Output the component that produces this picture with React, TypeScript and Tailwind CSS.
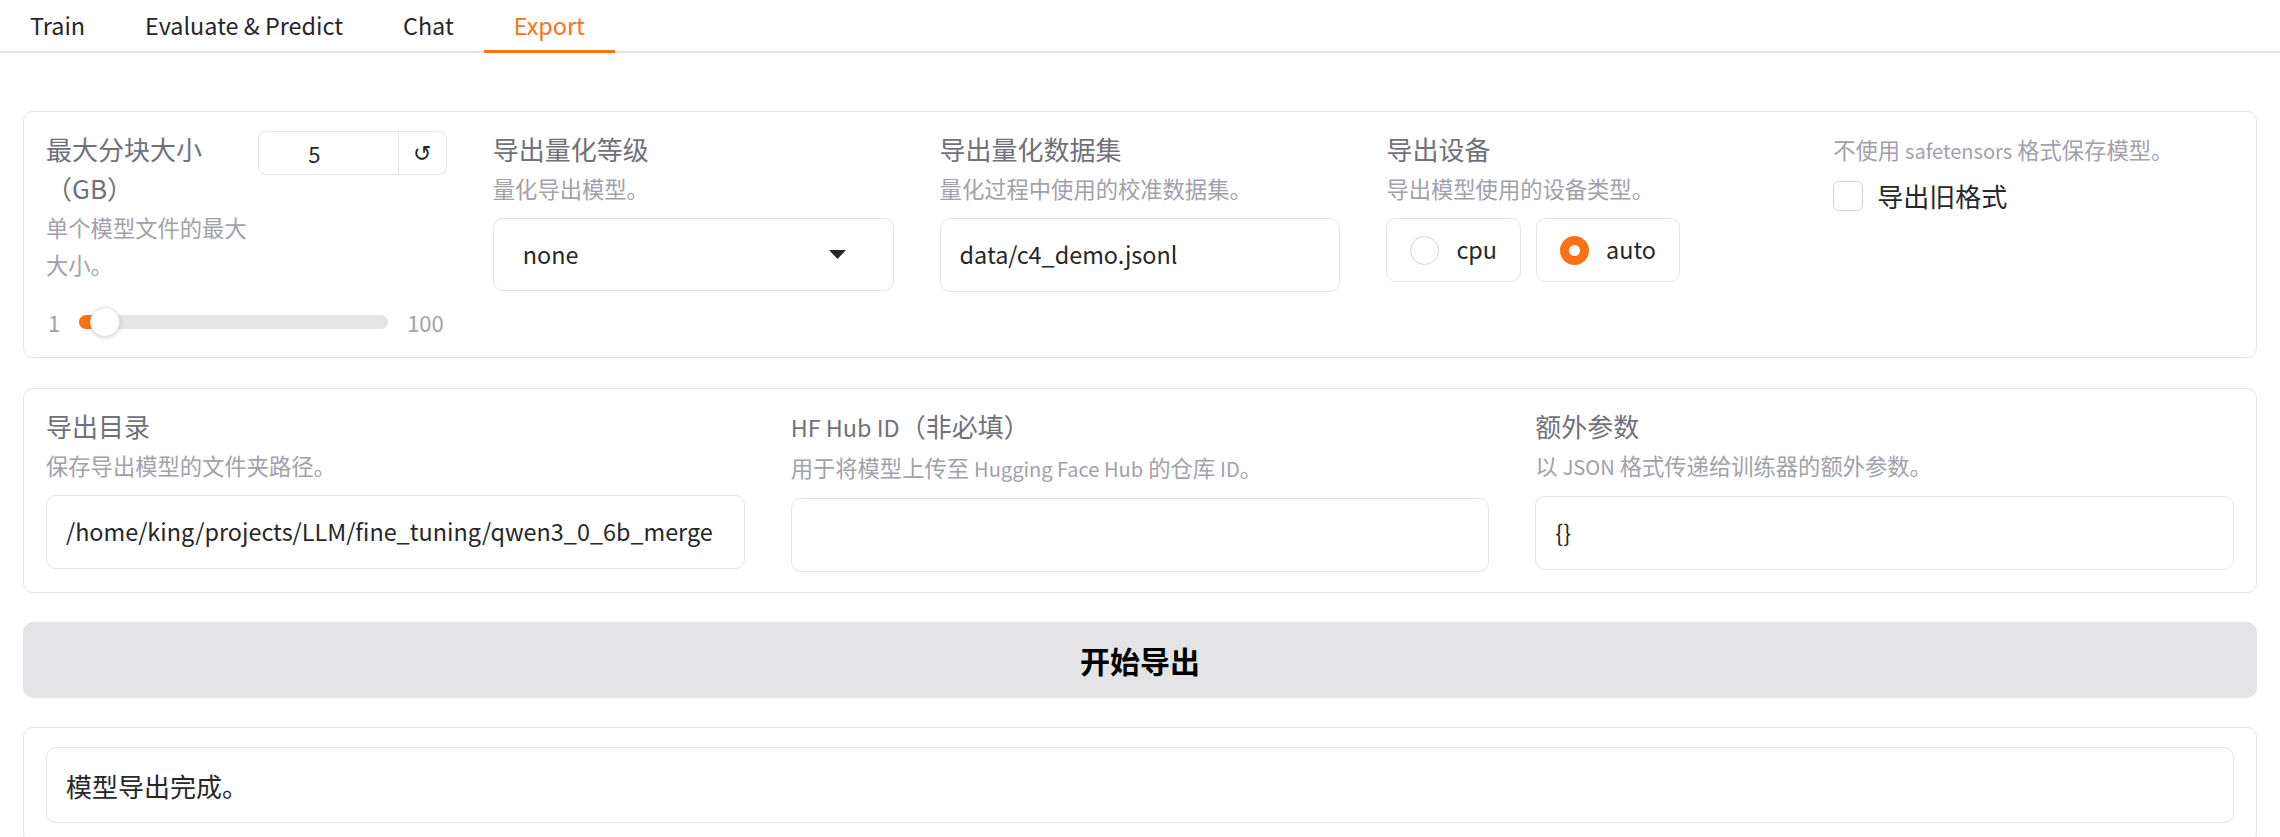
import React from "react";

const tabs = ["Train", "Evaluate & Predict", "Chat", "Export"];

// latin runs inside CJK text render a bit narrower in the original
function L({ children }: { children: React.ReactNode }) {
  return <span className="text-[0.9em]">{children}</span>;
}

function Label({ children }: { children: React.ReactNode }) {
  return <div className="text-[26px] leading-[39px] text-[#71717a]">{children}</div>;
}

function Info({ children }: { children: React.ReactNode }) {
  return <div className="mt-[2px] text-[22.3px] leading-[37px] text-[#a1a1aa]">{children}</div>;
}

function TextBox({ value }: { value: string }) {
  return (
    <div className="mt-[11px] h-[74px] flex items-center px-[19px] border border-[#e4e4e7] rounded-[10px] text-[23.4px] text-[#27272a] whitespace-nowrap overflow-hidden">
      {value}
    </div>
  );
}

function Radio({ label, checked }: { label: string; checked?: boolean }) {
  return (
    <div className="h-[64px] flex items-center gap-[17px] px-[23px] border border-[#e4e4e7] rounded-[10px]">
      {checked ? (
        <span className="w-[29px] h-[29px] rounded-full bg-[#f97316] flex items-center justify-center">
          <span className="w-[11px] h-[11px] rounded-full bg-white" />
        </span>
      ) : (
        <span className="w-[29px] h-[29px] rounded-full border border-[#d4d4d8] bg-white" />
      )}
      <span className="text-[23.4px] text-[#27272a]">{label}</span>
    </div>
  );
}

export default function App() {
  return (
    <div className="min-h-screen bg-white font-['Noto_Sans_CJK_SC',sans-serif]">
      {/* tabs */}
      <div className="flex h-[53px] border-b-2 border-[#e4e4e7]">
        {tabs.map((t) => {
          const active = t === "Export";
          return (
            <div
              key={t}
              className={`relative flex items-center px-[30px] text-[23.4px] ${active ? "text-[#f97316]" : "text-[#27272a]"}`}
            >
              {t}
              {active && <span className="absolute left-0 right-0 bottom-[-2px] h-[3px] bg-[#f97316]" />}
            </div>
          );
        })}
      </div>

      <div className="px-[23px] pt-[58px]">
        {/* settings card */}
        <div className="border border-[#e4e4e7] rounded-[10px] px-[22px] pt-[17px] pb-[20px]">
          <div className="grid grid-cols-5 gap-x-[46px] items-start">
            {/* slider */}
            <div className="flex flex-col">
              <div className="flex justify-between items-start">
                <div className="w-[210px]">
                  <Label>最大分块大小（GB）</Label>
                  <Info>单个模型文件的最大大小。</Info>
                </div>
                <div className="mt-[2px] flex h-[44px] border border-[#e4e4e7] rounded-[8px]">
                  <div className="w-[139px] flex items-center justify-center pr-[28px] text-[22px] text-[#27272a]">5</div>
                  <div className="w-[48px] flex items-center justify-center border-l border-[#e4e4e7] text-[22px] text-[#27272a] font-['DejaVu_Sans',sans-serif]">
                    ↺
                  </div>
                </div>
              </div>
              <div className="mt-[24px] h-[30px] flex items-center gap-[19px] text-[22px] text-[#a1a1aa]">
                <span className="pl-[2px]">1</span>
                <div className="relative flex-1 h-[14px] rounded-full bg-[#e4e4e7]">
                  <div className="absolute left-0 top-0 h-[14px] w-[26px] rounded-full bg-[#f97316]" />
                  <div className="absolute left-[11px] top-[-8px] w-[30px] h-[30px] rounded-full bg-white border border-[#e4e4e7] shadow-[0_1px_4px_rgba(0,0,0,0.18)]" />
                </div>
                <span className="pr-[3px]">100</span>
              </div>
            </div>

            {/* quantization bit */}
            <div>
              <Label>导出量化等级</Label>
              <Info>量化导出模型。</Info>
              <div className="mt-[11px] h-[73px] flex items-center justify-between pl-[29px] pr-[47px] border border-[#e4e4e7] rounded-[10px] text-[23.4px] text-[#27272a]">
                <span>none</span>
                <svg width="17" height="9" viewBox="0 0 17 9">
                  <path d="M0 0 H17 L8.5 9 Z" fill="#27272a" />
                </svg>
              </div>
            </div>

            {/* dataset */}
            <div>
              <Label>导出量化数据集</Label>
              <Info>量化过程中使用的校准数据集。</Info>
              <TextBox value="data/c4_demo.jsonl" />
            </div>

            {/* device */}
            <div>
              <Label>导出设备</Label>
              <Info>导出模型使用的设备类型。</Info>
              <div className="mt-[11px] flex gap-[15px]">
                <Radio label="cpu" />
                <Radio label="auto" checked />
              </div>
            </div>

            {/* legacy */}
            <div>
              <Info>
                不使用 <L>safetensors</L> 格式保存模型。
              </Info>
              <div className="mt-[7px] flex items-center gap-[14px]">
                <span className="w-[30px] h-[30px] rounded-[6px] border border-[#d4d4d8] bg-white" />
                <span className="text-[26px] text-[#27272a]">导出旧格式</span>
              </div>
            </div>
          </div>
        </div>

        {/* paths card */}
        <div className="mt-[30px] border border-[#e4e4e7] rounded-[10px] px-[22px] pt-[17px] pb-[20px]">
          <div className="grid grid-cols-3 gap-x-[46px]">
            <div>
              <Label>导出目录</Label>
              <Info>保存导出模型的文件夹路径。</Info>
              <TextBox value="/home/king/projects/LLM/fine_tuning/qwen3_0_6b_merge" />
            </div>
            <div>
              <Label>
                <L>HF Hub ID</L>（非必填）
              </Label>
              <Info>
                用于将模型上传至 <L>Hugging Face Hub</L> 的仓库 <L>ID</L>。
              </Info>
              <TextBox value="" />
            </div>
            <div>
              <Label>额外参数</Label>
              <Info>
                以 <L>JSON</L> 格式传递给训练器的额外参数。
              </Info>
              <TextBox value="{}" />
            </div>
          </div>
        </div>

        <button className="mt-[29px] w-full h-[76px] rounded-[10px] bg-[#e4e4e7] text-[30px] font-bold text-black">
          开始导出
        </button>

        {/* output */}
        <div className="mt-[29px] border border-[#e4e4e7] rounded-[10px] px-[22px] pt-[19px] pb-[20px]">
          <div className="h-[76px] flex items-center px-[19px] border border-[#e4e4e7] rounded-[10px] text-[26px] text-[#27272a]">
            模型导出完成。
          </div>
        </div>
      </div>
    </div>
  );
}
